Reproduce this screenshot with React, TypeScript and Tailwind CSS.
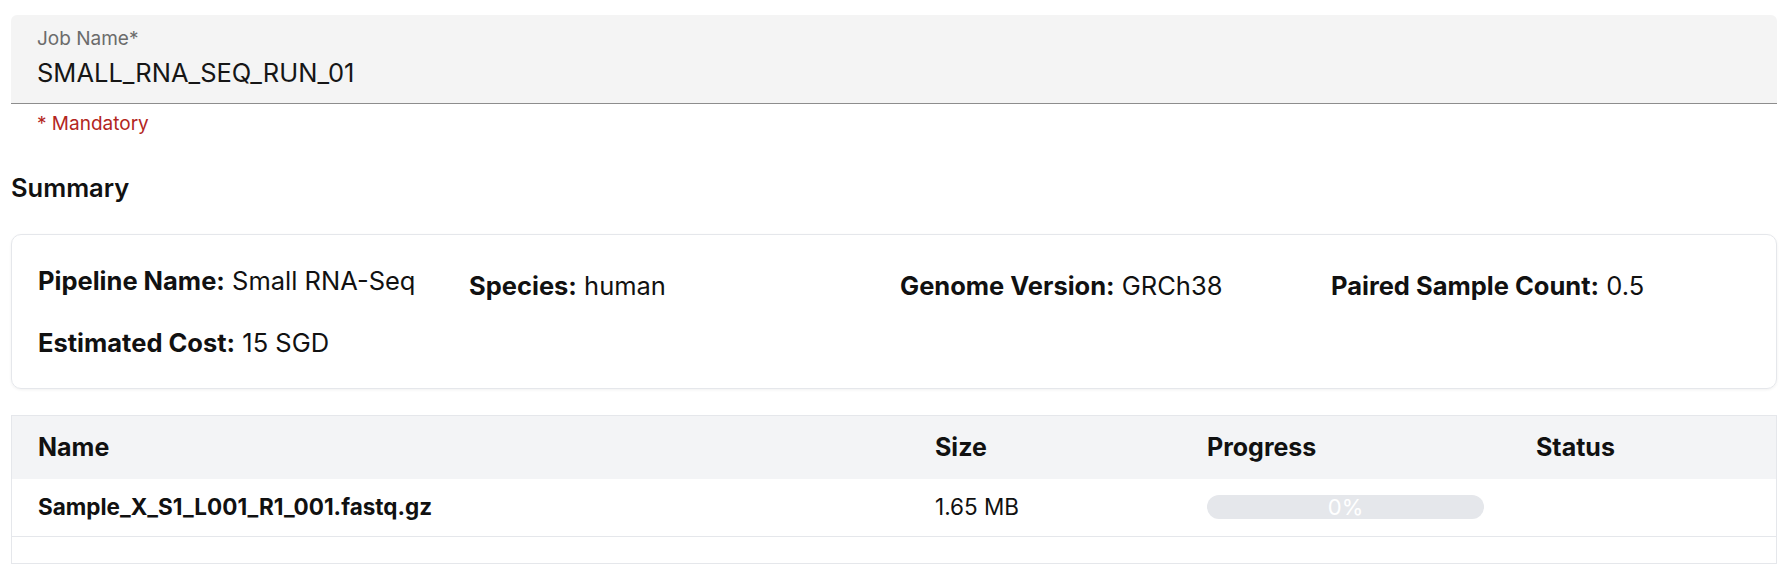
import React from "react";

const summaryItems = [
  { label: "Pipeline Name:", value: "Small RNA-Seq" },
  { label: "Species:", value: "human" },
  { label: "Genome Version:", value: "GRCh38" },
  { label: "Paired Sample Count:", value: "0.5" },
  { label: "Estimated Cost:", value: "15 SGD" },
];

const files = [{ name: "Sample_X_S1_L001_R1_001.fastq.gz", size: "1.65 MB", progress: 0, status: "" }];

export default function App() {
  return (
    <main
      className="min-h-screen bg-white pl-[11px] pr-[15px] pt-[15px] text-[#111111]"
      style={{ fontFamily: "Inter, 'Noto Sans', sans-serif" }}
    >
      {/* job name field */}
      <div className="rounded-t-[6px] border-b border-[#8d8d8d] bg-[#f4f4f4] px-[26px] pb-[12px] pt-[10px]">
        <label className="block text-[19px] leading-[28px] text-[#6b6b6b]">Job Name*</label>
        <div className="mt-[2px] text-[25.5px] leading-[36px] text-[#161616]">SMALL_RNA_SEQ_RUN_01</div>
      </div>
      <p className="mt-[7px] pl-[26px] text-[19px] leading-[26px] text-[#b3261e]">* Mandatory</p>

      <h2 className="mt-[33px] text-[25.5px] font-semibold leading-[36px]">Summary</h2>

      <section className="mt-[28px] grid grid-cols-4 items-start gap-x-[12px] gap-y-[21px] rounded-[10px] border border-[#e5e7eb] px-[26px] pb-[27px] pt-[28px] shadow-[0_1px_3px_rgba(0,0,0,0.06)]">
        {summaryItems.map((item, i) => (
          <div
            key={item.label}
            className={i > 0 && i < 4 ? "mt-[5px] text-[25.5px] leading-[36px]" : "text-[25.5px] leading-[36px]"}
          >
            <span className="font-bold">{item.label}</span> {item.value}
          </div>
        ))}
      </section>

      <div className="mt-[26px] border border-[#e5e7eb] pb-[26px]">
        <table className="w-full table-fixed border-collapse text-left">
          <colgroup>
            <col className="w-[897px]" />
            <col className="w-[272px]" />
            <col className="w-[329px]" />
            <col />
          </colgroup>
          <thead className="bg-[#f3f4f6]">
            <tr className="h-[63px] text-[25px]">
              <th className="px-[26px] font-bold">Name</th>
              <th className="px-[26px] font-bold">Size</th>
              <th className="px-[26px] font-bold">Progress</th>
              <th className="px-[26px] font-bold">Status</th>
            </tr>
          </thead>
          <tbody>
            {files.map((f) => (
              <tr key={f.name} className="h-[57px] border-b border-[#e5e7eb] text-[22.5px]">
                <td className="px-[26px] font-bold">{f.name}</td>
                <td className="px-[26px]">{f.size}</td>
                <td className="px-[26px]">
                  <div className="relative h-[24px] overflow-hidden rounded-full bg-[#e5e7eb]">
                    <div className="h-full bg-[#3b82f6]" style={{ width: `${f.progress}%` }} />
                    <span className="absolute inset-0 text-center text-[22px] leading-[24px] text-white">
                      {f.progress}%
                    </span>
                  </div>
                </td>
                <td className="px-[26px]">{f.status}</td>
              </tr>
            ))}
          </tbody>
        </table>
      </div>
    </main>
  );
}
